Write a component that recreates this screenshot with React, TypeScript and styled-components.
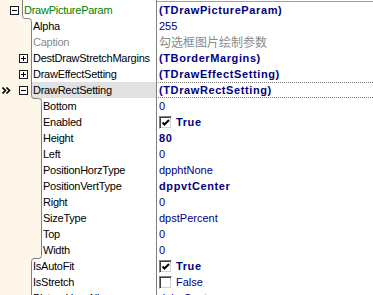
import { FC, ReactNode } from "react";
import styled, { createGlobalStyle } from "styled-components";

const gutterColor = "#fef7e9";
const lineColor = "#808080";
const valueColor = "#000080";

const GlobalStyle = createGlobalStyle`
  html, body {
    margin: 0;
    padding: 0;
    background: ${gutterColor};
    overflow: hidden;
  }
  body {
    width: 373px;
    height: 295px;
    font-family: "Liberation Sans", Tahoma, Arial, sans-serif;
    font-size: 11px;
  }
`;

const Inspector = styled.div`
  width: 373px;
  height: 295px;
  overflow: hidden;
  background: ${gutterColor};
`;

const Row = styled.div<{ $top?: boolean }>`
  display: flex;
  height: ${(p) => (p.$top ? 18 : 16)}px;
  line-height: 16px;
`;

const NameCell = styled.div`
  position: relative;
  display: flex;
  width: 156px;
  flex: none;
`;

const Gutter = styled.div<{ $indent: number }>`
  display: flex;
  align-items: flex-end;
  width: ${(p) => p.$indent}px;
  flex: none;
  padding-bottom: 3px;
  box-sizing: border-box;
`;

const Marker = styled.svg`
  margin: 0 0 1px 2px;
  display: block;
`;

const Expander = styled.div`
  position: relative;
  width: 9px;
  height: 9px;
  margin-left: auto;
  margin-right: 3px;
  box-sizing: border-box;
  border: 1px solid #1a1a1a;
  background: #fff;

  &::before,
  &::after {
    content: "";
    position: absolute;
    background: #000;
  }
  &::before {
    left: 1px;
    top: 3px;
    width: 5px;
    height: 1px;
  }
`;

const PlusBox = styled(Expander)`
  &::after {
    left: 3px;
    top: 1px;
    width: 1px;
    height: 5px;
  }
`;

const NameText = styled.div<{ $selected?: boolean; $color: string; $top?: boolean }>`
  flex: 1;
  min-width: 0;
  box-sizing: border-box;
  padding: ${(p) => (p.$top ? "2px 0 0 1px" : "0 0 0 1px")};
  border-left: 1px solid ${lineColor};
  background: ${(p) => (p.$selected ? "#e1e1e1" : "#fff")};
  color: ${(p) => p.$color};
  letter-spacing: -0.25px;
  white-space: nowrap;
  overflow: hidden;
`;

const ValueCell = styled.div<{ $selected?: boolean; $top?: boolean }>`
  flex: 1;
  display: flex;
  align-items: center;
  gap: 4px;
  box-sizing: border-box;
  padding: ${(p) => (p.$top ? "2px 0 0 2px" : "0 0 0 2px")};
  border-left: 1px solid ${lineColor};
  background: ${(p) =>
    p.$top
      ? "linear-gradient(#fff 1px, #a0a0a0 1px, #a0a0a0 2px, #fff 2px)"
      : "#fff"};
  ${(p) =>
    p.$selected &&
    `
    border-top: 1px dotted #7a7a7a;
    border-bottom: 1px dotted #7a7a7a;
  `}
  white-space: nowrap;
  overflow: hidden;
`;

const Value = styled.span<{ $bold?: boolean; $gray?: boolean }>`
  color: ${(p) => (p.$gray ? "#8a8a8a" : valueColor)};
  font-weight: ${(p) => (p.$bold ? "bold" : "normal")};
  letter-spacing: ${(p) => (p.$bold ? "0.6px" : "0")};
  font-size: ${(p) => (p.$gray ? "12px" : "11px")};
  font-family: ${(p) =>
    p.$gray
      ? `"Noto Sans CJK SC", "Liberation Sans", sans-serif`
      : `"Liberation Sans", Tahoma, Arial, sans-serif`};
`;

const CheckBox = styled.span`
  position: relative;
  display: inline-block;
  width: 13px;
  height: 13px;
  flex: none;
  box-sizing: border-box;
  border-top: 1px solid #808080;
  border-left: 1px solid #808080;
  border-bottom: 1px solid #fff;
  border-right: 1px solid #fff;
  box-shadow: inset 1px 1px 0 #404040, inset -1px -1px 0 #d4d0c8;
  background: #fff;

  svg {
    position: absolute;
    left: 2px;
    top: 2px;
  }
`;

const Joint = styled.svg`
  position: absolute;
  bottom: -4px;
  z-index: 2;
  display: block;
`;

type Curve = { from: number; to: number; fill: string };

const CurveJoint: FC<Curve> = ({ from, to, fill }) => {
  const left = Math.min(from, to);
  const w = Math.abs(to - from);
  const inward = to > from;
  // the tree line steps sideways with a rounded knee
  const stroke = inward
    ? `M0.5 0 V1.5 Q0.5 4.5 3 4.5 H${w - 2.5} Q${w + 0.5} 4.5 ${w + 0.5} 7.5 V8`
    : `M${w + 0.5} 0 V1.5 Q${w + 0.5} 4.5 ${w - 2} 4.5 H3 Q0.5 4.5 0.5 7.5 V8`;
  return (
    <Joint width={w + 1} height={8} style={{ left }} viewBox={`0 0 ${w + 1} 8`}>
      <rect width={w + 1} height={8} fill={gutterColor} />
      {inward ? (
        <path d={`${stroke} H${w + 1} V0 Z`} fill={fill} />
      ) : (
        <>
          <rect x={w} width={1} height={4} fill="#fff" />
          <path d={`${stroke} H${w + 1} V8 Z`} fill="#fff" />
        </>
      )}
      <path d={stroke} fill="none" stroke={lineColor} strokeWidth={1} />
    </Joint>
  );
};

const Tick: FC = () => (
  <svg width="8" height="8" viewBox="0 0 8 8">
    <path d="M0.5 3.5 L2.5 5.5 L7 1" fill="none" stroke="#000" strokeWidth="2" />
  </svg>
);

type Prop = {
  name: string;
  level: 0 | 1 | 2;
  value: ReactNode;
  expander?: "plus" | "minus";
  marker?: boolean;
  selected?: boolean;
  nameColor?: string;
  curve?: Curve;
};

const indents = [22, 31, 41];

const checked = (text: string, on: boolean, bold: boolean) => (
  <>
    <CheckBox>{on && <Tick />}</CheckBox>
    <Value $bold={bold}>{text}</Value>
  </>
);

const props: Prop[] = [
  {
    name: "DrawPictureParam",
    level: 0,
    expander: "minus",
    nameColor: "#008000",
    value: <Value $bold>(TDrawPictureParam)</Value>,
    curve: { from: 22, to: 31, fill: "#fff" },
  },
  { name: "Alpha", level: 1, value: <Value>255</Value> },
  {
    name: "Caption",
    level: 1,
    nameColor: "#8a8a8a",
    value: <Value $gray>勾选框图片绘制参数</Value>,
  },
  {
    name: "DestDrawStretchMargins",
    level: 1,
    expander: "plus",
    value: <Value $bold>(TBorderMargins)</Value>,
  },
  {
    name: "DrawEffectSetting",
    level: 1,
    expander: "plus",
    value: <Value $bold>(TDrawEffectSetting)</Value>,
  },
  {
    name: "DrawRectSetting",
    level: 1,
    expander: "minus",
    marker: true,
    selected: true,
    value: <Value $bold>(TDrawRectSetting)</Value>,
    curve: { from: 31, to: 41, fill: "#e1e1e1" },
  },
  { name: "Bottom", level: 2, value: <Value>0</Value> },
  { name: "Enabled", level: 2, value: checked("True", true, true) },
  { name: "Height", level: 2, value: <Value $bold>80</Value> },
  { name: "Left", level: 2, value: <Value>0</Value> },
  { name: "PositionHorzType", level: 2, value: <Value>dpphtNone</Value> },
  { name: "PositionVertType", level: 2, value: <Value $bold>dppvtCenter</Value> },
  { name: "Right", level: 2, value: <Value>0</Value> },
  { name: "SizeType", level: 2, value: <Value>dpstPercent</Value> },
  { name: "Top", level: 2, value: <Value>0</Value> },
  {
    name: "Width",
    level: 2,
    value: <Value>0</Value>,
    curve: { from: 41, to: 31, fill: "#fff" },
  },
  { name: "IsAutoFit", level: 1, value: checked("True", true, true) },
  { name: "IsStretch", level: 1, value: checked("False", false, false) },
  { name: "PictureHorzAlign", level: 1, value: <Value>dphaCenter</Value> },
];

const App: FC = () => {
  return (
    <Inspector>
      <GlobalStyle />
      {props.map((p, i) => (
        <Row key={p.name} $top={i === 0}>
          <NameCell>
            <Gutter $indent={indents[p.level]}>
              {p.marker && (
                <Marker width="9" height="7" viewBox="0 0 9 7">
                  <path
                    d="M0.5 0.5 L3.5 3.5 L0.5 6.5 M4.5 0.5 L7.5 3.5 L4.5 6.5"
                    fill="none"
                    stroke="#000"
                    strokeWidth="1.6"
                  />
                </Marker>
              )}
              {p.expander === "minus" && <Expander />}
              {p.expander === "plus" && <PlusBox />}
            </Gutter>
            <NameText
              $selected={p.selected}
              $color={p.nameColor ?? "#000"}
              $top={i === 0}
            >
              {p.name}
            </NameText>
            {p.curve && <CurveJoint {...p.curve} />}
          </NameCell>
          <ValueCell $selected={p.selected} $top={i === 0}>
            {p.value}
          </ValueCell>
        </Row>
      ))}
    </Inspector>
  );
};

export default App;
